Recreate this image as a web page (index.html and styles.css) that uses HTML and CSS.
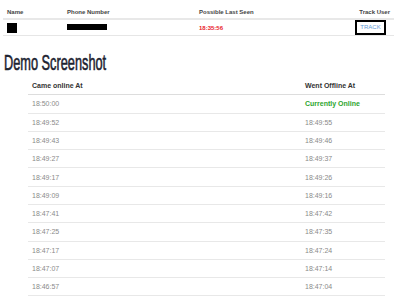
FILE: index.html
```html
<!DOCTYPE html>
<html>
<head>
<meta charset="utf-8">
<link rel="stylesheet" href="styles.css">
</head>
<body>
<table class="users">
  <thead>
    <tr>
      <th class="c-name">Name</th>
      <th class="c-phone">Phone Number</th>
      <th class="c-seen">Possible Last Seen</th>
      <th class="c-track">Track User</th>
    </tr>
  </thead>
  <tbody>
    <tr>
      <td><span class="redact-box"></span></td>
      <td><span class="redact-bar"></span></td>
      <td class="last-seen">18:35:56</td>
      <td class="c-track"><button class="track-btn">TRACK</button></td>
    </tr>
  </tbody>
</table>

<h1 class="title"><span class="title-text">Demo Screenshot</span></h1>

<div class="log">
  <div class="log-row log-head"><div>Came online At</div><div>Went Offline At</div></div>
  <div class="log-row"><div>18:50:00</div><div class="online">Currently Online</div></div>
  <div class="log-row"><div>18:49:52</div><div>18:49:55</div></div>
  <div class="log-row"><div>18:49:43</div><div>18:49:46</div></div>
  <div class="log-row"><div>18:49:27</div><div>18:49:37</div></div>
  <div class="log-row"><div>18:49:17</div><div>18:49:26</div></div>
  <div class="log-row"><div>18:49:09</div><div>18:49:16</div></div>
  <div class="log-row"><div>18:47:41</div><div>18:47:42</div></div>
  <div class="log-row"><div>18:47:25</div><div>18:47:35</div></div>
  <div class="log-row"><div>18:47:17</div><div>18:47:24</div></div>
  <div class="log-row"><div>18:47:07</div><div>18:47:14</div></div>
  <div class="log-row"><div>18:46:57</div><div>18:47:04</div></div>
</div>
</body>
</html>
```

FILE: styles.css
```css
html, body {
  margin: 0;
  padding: 0;
  background: #fff;
}
body {
  font-family: "Liberation Sans", Arial, sans-serif;
  font-size: 7px;
  color: #333;
  overflow: hidden;
}
table {
  border-collapse: collapse;
  border-spacing: 0;
}
.users {
  margin: 2px 0 0 3px;
  width: 391px;
}
.users th {
  font-weight: bold;
  text-align: left;
  line-height: 10px;
  padding: 5px 4px 1px;
  border-bottom: 2px solid #e8e8e8;
  color: #444;
  font-size: 6px;
}
.users .c-name { width: 52px; }
.users .c-phone { width: 124px; }
.users .c-track { text-align: right; }
.users td {
  padding: 0 4px;
  height: 14px;
  border-bottom: 1px solid #e6e6e6;
  vertical-align: middle;
}
.redact-box {
  display: block;
  width: 10px;
  height: 10px;
  background: #000;
  margin-top: 1px;
}
.redact-bar {
  display: block;
  width: 40px;
  height: 6px;
  background: #000;
  margin-top: -2px;
}
.last-seen {
  color: #e8192c;
  font-weight: bold;
  font-size: 6px;
}
.track-btn {
  display: inline-block;
  margin: 0 4px 0 0;
  width: 31px;
  height: 15px;
  padding: 0;
  border: 2px solid #000;
  background: #fff;
  color: #5d9ad6;
  font-family: "Liberation Sans", Arial, sans-serif;
  font-size: 6px;
  line-height: 11px;
  vertical-align: middle;
}
.title {
  margin: 15px 0 0 4px;
  font-family: "Liberation Sans", Arial, sans-serif;
  font-weight: normal;
  font-size: 22px;
  line-height: 24px;
  color: #1c2230;
  white-space: nowrap;
}
.title-text {
  display: inline-block;
  -webkit-text-stroke: 0.6px #1c2230;
  transform: scale(0.58, 1);
  transform-origin: 0 50%;
}
.log {
  margin: 2px 0 0 28px;
  width: 357px;
}
.log-row {
  display: grid;
  grid-template-columns: 273px 1fr;
  border-bottom: 1px solid #e8e8e8;
}
.log-row > div {
  padding: 4.15px 4px;
  line-height: 9px;
  color: #8a8a8a;
}
.log-head > div {
  font-weight: bold;
  color: #333;
}
.log-head {
  border-bottom-color: #ddd;
}
.log-row > .online {
  color: #2ea52e;
  font-weight: bold;
}
```
